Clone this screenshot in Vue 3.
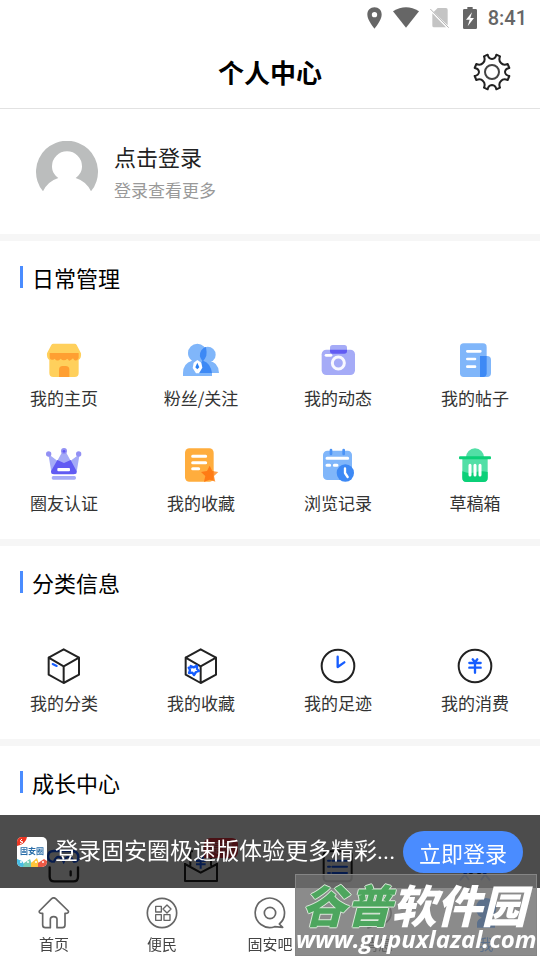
<script setup>
const daily = [
  { label: '我的主页', icon: 'shop' },
  { label: '粉丝/关注', icon: 'fans' },
  { label: '我的动态', icon: 'camera' },
  { label: '我的帖子', icon: 'posts' },
  { label: '圈友认证', icon: 'crown' },
  { label: '我的收藏', icon: 'favorite' },
  { label: '浏览记录', icon: 'history' },
  { label: '草稿箱', icon: 'drafts' }
]
const classified = [
  { label: '我的分类', icon: 'box' },
  { label: '我的收藏', icon: 'starbox' },
  { label: '我的足迹', icon: 'clock' },
  { label: '我的消费', icon: 'yuan' }
]
const tabs = [
  { label: '首页', icon: 'home' },
  { label: '便民', icon: 'apps' },
  { label: '固安吧', icon: 'forum' },
  { label: '消息', icon: 'message' },
  { label: '我', icon: 'me', active: true }
]
</script>

<template>
  <div class="page">
    <div class="status">
      <svg width="15" height="22" viewBox="0 0 45 66" fill="#666"><path fill-rule="evenodd" d="M22.500 1C10 1 1 10 1 23c0 16 21.500 42 21.500 42S44 39 44 23C44 10 35 1 22.500 1zm0 14a8 8 0 1 1 0 16 8 8 0 0 1 0-16z" /></svg>
      <svg width="26" height="22" viewBox="0 0 78 66" fill="#666"><path d="M0 13Q39-12 78 13L39 62z" /></svg>
      <svg width="22" height="22" viewBox="0 0 66 66"><path d="M23 3h25q5 0 5 5v47L11 15zM7 19l41 42H12q-5 0-5-5z" fill="#c4c4c4" /><path d="M1 6l55 56" stroke="#b5b5b5" stroke-width="3" /></svg>
      <svg width="14" height="22" viewBox="0 0 42 66"><path d="M13 0h16v6h9q4 0 4 4v52q0 4-4 4H4q-4 0-4-4V10q0-4 4-4h9z" fill="#666" /><path d="M27 16L9 38h11l-6 20 19-25H22z" fill="#fff" /></svg>
      <span>8:41</span>
    </div>

    <header class="header">
      <h1>个人中心</h1>
      <button class="gear" aria-label="设置">
        <svg width="38" height="38" viewBox="0 0 114 114" fill="none" stroke-linejoin="round">
          <path d="M33 10L44 5Q46 17 57 18Q68 17 70 5L81 10Q76 23 84 30Q91 38 104 33L109 45Q97 47 96 57Q97 67 109 69L104 81Q91 76 84 84Q76 91 81 104L70 109Q68 97 57 96Q46 97 44 109L33 104Q38 91 30 84Q23 76 10 81L5 69Q17 67 18 57Q17 47 5 45L10 33Q23 38 30 30Q38 23 33 10z" stroke="#222" stroke-width="6" />
          <circle cx="57" cy="57" r="21" stroke="#444" stroke-width="6" />
        </svg>
      </button>
    </header>

    <a class="profile" href="#login">
      <svg class="avatar" width="62" height="62" viewBox="0 0 186 186"><path fill="#bbbdbd" d="M21 151A93 93 0 1 1 165 151Q151 121 119 111C132 101 138 91 138 76a45 45 0 0 0-90 0c0 15 6 25 19 35Q35 121 21 151z" /></svg>
      <span class="who"><strong>点击登录</strong><small>登录查看更多</small></span>
    </a>

    <section class="panel">
      <h2>日常管理</h2>
      <div class="grid">
        <a v-for="item in daily" :key="item.icon" href="#" class="entry">
          <svg width="36" height="36" viewBox="0 0 108 108">
            <template v-if="item.icon === 'shop'">
              <path d="M22 2h64q4 0 6 4l13 25q2 14-7 20v39q0 12-12 12H22q-12 0-12-12V51Q1 45 3 31L16 6q2-4 6-4z" fill="#ffd05c" />
              <path d="M11 30h87v15q-6 12-14 5l-3-4q-12 12-14 4l-3-3q-11 10-20 0-10 11-18 0-10 8-15-2z" fill="#ff9f32" />
              <path d="M39 102V80q0-11 11-11h9q11 0 11 11v22z" fill="#ff9f32" />
            </template>
            <template v-else-if="item.icon === 'fans'">
              <circle cx="74" cy="35" r="24" fill="#80b6fa" /><path d="M40 90Q45 55 76 54q31 2 32 36z" fill="#80b6fa" />
              <path d="M27 53C17 45 15 38 15 30a28 28 0 0 1 56 0c0 9-4 17-10 23 15 5 26 20 26 37v9H0V90q0-29 27-37z" fill="#80b6fa" />
              <path d="M55 22q8-10 14-10 3 16 1 26-4 10-9 15 22 8 26 37H45q-1-20 13-36-13-16-3-32z" fill="#3d89f5" />
              <path d="M43 51l12 8 3 15-10 17H39L29 75l3-16z" fill="#fff" /><path d="M43 59l6 14-6 6-6-6z" fill="#267ff4" />
            </template>
            <template v-else-if="item.icon === 'camera'">
              <rect x="5" y="20" width="100" height="76" rx="14" fill="#a5abf7" /><rect x="30" y="6" width="51" height="26" rx="8" fill="#a5abf7" />
              <path d="M30 20h51v4q0 8-8 8H38q-8 0-8-8z" fill="#615bf3" /><rect x="14" y="33" width="23" height="8" rx="4" fill="#fff" />
              <circle cx="55" cy="60" r="18" fill="none" stroke="#f8f8ff" stroke-width="9" />
            </template>
            <template v-else-if="item.icon === 'posts'">
              <rect x="9" y="1" width="80" height="101" rx="11" fill="#80b6fa" /><path d="M69 39h21q12 0 12 12v39q0 12-12 12H69z" fill="#80b6fa" />
              <path d="M69 39h20v52q0 11-11 11h-9z" fill="#3d89f5" /><path d="M31 25h39M31 48h23M31 71h23" stroke="#fff" stroke-width="8" stroke-linecap="round" />
            </template>
            <template v-else-if="item.icon === 'crown'">
              <path d="M7 18l27 20L50 9h8l16 29 27-20-10 60H17z" fill="#a5abf7" /><circle cx="8" cy="18" r="8" fill="#9290f4" /><circle cx="54" cy="9" r="9" fill="#9290f4" /><circle cx="98" cy="18" r="8" fill="#9290f4" />
              <path d="M34 36l20 9 20-9 18 34q0 9-9 9H24q-9 0-9-9z" fill="#615bf3" /><circle cx="54" cy="10" r="4" fill="#615bf3" />
              <rect x="34" y="60" width="38" height="10" rx="3" fill="#fff" /><rect x="17" y="84" width="73" height="11" rx="5" fill="#a5abf7" />
            </template>
            <template v-else-if="item.icon === 'favorite'">
              <rect x="6" y="1" width="86" height="100" rx="13" fill="#ffad3d" />
              <path d="M29 25h39M29 44h39M29 62h18" stroke="#fff" stroke-width="9" stroke-linecap="round" />
              <path d="M80 53l8 16 18 3-13 12 4 17-17-6-17 6 4-17-13-12 18-3z" fill="#ffa04a" /><path d="M80 53l8 16 4 1v28l-12-3-17 6 4-17-13-12 18-3z" fill="#ff7b14" />
            </template>
            <template v-else-if="item.icon === 'history'">
              <rect x="9" y="8" width="87" height="88" rx="13" fill="#80b6fa" /><path d="M33 6v12M71 6v12" stroke="#4b93f6" stroke-width="8" stroke-linecap="round" />
              <path d="M21 31h62M21 52h8M43 52h8" stroke="#fff" stroke-width="9" stroke-linecap="round" /><circle cx="76" cy="75" r="26" fill="#3d89f5" />
              <path d="M75 61v14l8 12" fill="none" stroke="#fff" stroke-width="7" stroke-linecap="round" stroke-linejoin="round" />
            </template>
            <template v-else>
              <path d="M27 28a27 27 0 0 1 54 0zM16 30h76v59q0 13-13 13H29q-13 0-13-13z" fill="#52dfa6" /><path d="M16 70q20 9 38 3t38-1v17q0 13-13 13H29q-13 0-13-13z" fill="#0bd078" />
              <rect x="6" y="25" width="96" height="9" rx="3" fill="#0bd078" /><path d="M39 52v29M54 52v29M69 52v29" stroke="#fff" stroke-width="9" stroke-linecap="round" />
            </template>
          </svg>
          <span>{{ item.label }}</span>
        </a>
      </div>
    </section>

    <section class="panel">
      <h2>分类信息</h2>
      <div class="grid">
        <a v-for="item in classified" :key="item.icon" href="#" class="entry">
          <svg width="36" height="36" viewBox="0 0 108 108" fill="none" stroke="#222" stroke-width="6" stroke-linejoin="round" stroke-linecap="round">
            <template v-if="item.icon === 'box' || item.icon === 'starbox'">
              <path d="M53 4l46 25v51l-46 25L8 80V29zM8 29l45 26 46-26M53 55v49" />
              <path v-if="item.icon === 'box'" d="M20 48l12 6" stroke="#165dff" />
              <path v-else d="M23 54l9 4 10-5v10l6 6-9 3-6 9-5-7-10 1 3-9-4-7 8-1z" stroke="#165dff" stroke-width="7" />
            </template>
            <template v-else>
              <circle cx="54" cy="54" r="49" />
              <path v-if="item.icon === 'clock'" d="M53 26v31l20-14" stroke="#165dff" stroke-width="7" />
              <path v-else d="M47 34l7 9 7-9M37 45h34M37 59h34M54 44v30" stroke="#165dff" stroke-width="7" />
            </template>
          </svg>
          <span>{{ item.label }}</span>
        </a>
      </div>
    </section>

    <section class="panel">
      <h2>成长中心</h2>
      <div class="grid">
        <a href="#" class="entry" aria-label="钱包">
          <svg width="36" height="36" viewBox="0 0 108 108" fill="none" stroke-width="7" stroke-linecap="round"><path d="M18 41Q6 38 6 25 7 9 23 9h57q16 1 17 17 0 13-10 15M24 41q12-29 29 0 14-29 31 0" stroke="#165dff" /><path d="M11 58v28q0 14 14 14h57q14 0 14-14V58M74 70v12" stroke="#222" /></svg>
        </a>
        <a href="#" class="entry" aria-label="提现">
          <svg width="36" height="36" viewBox="0 0 108 108" fill="none" stroke-width="6" stroke-linejoin="round"><path d="M30 10H22V53M84 53V10h-8M6 45v54h96V45M6 48l47 26 49-26" stroke="#222" /><path d="M43 25l10 12 10-12M39 39h29M39 49h29M53 37v25" stroke="#165dff" /></svg>
          <em class="badge">提现</em>
        </a>
        <a href="#" class="entry" aria-label="任务">
          <svg width="36" height="36" viewBox="0 0 108 108" fill="none" stroke-width="6"><rect x="11" y="10" width="84" height="90" rx="10" stroke="#222" /><path d="M24 38h6M37 38h44M24 56h6M37 56h44M24 75h6M37 75h44" stroke="#165dff" stroke-linecap="round" /></svg>
        </a>
        <a href="#" class="entry" aria-label="等级">
          <svg width="36" height="36" viewBox="0 0 108 108" fill="none" stroke-width="6"><circle cx="54" cy="37" r="32" stroke="#222" /><path d="M37 80l17-12 17 12" stroke="#222" /><path d="M32 69L9 97M21 75l15 21M76 69l23 28M87 75L72 96" stroke="#165dff" /></svg>
        </a>
      </div>
    </section>

    <div class="dock">
      <aside class="banner">
        <svg class="logo" width="30" height="30" viewBox="0 0 30 30">
          <defs><clipPath id="logo-shape"><rect width="30" height="30" rx="5" /></clipPath></defs>
          <g clip-path="url(#logo-shape)">
            <rect width="30" height="30" fill="#fff" /><path d="M0 0h10Q9 7 0 9z" fill="#ed3521" /><path d="M5 2L3 4l3 1-3 2" fill="none" stroke="#fff" />
            <path d="M0 22l5 2 4 6H0z" fill="#48bde4" /><path d="M7 26l6-4 3 8H6z" fill="#75cbb6" /><path d="M14 26l6-5 3 9h-9z" fill="#ffc53b" /><path d="M21 26l6-4 3 2v6h-9z" fill="#ed5945" /><circle cx="4" cy="25" r="1" fill="#fff" /><circle cx="11" cy="25" r="1" fill="#fff" /><circle cx="19" cy="25" r="1" fill="#fff" /><circle cx="26" cy="25" r="1" fill="#fff" />
          </g>
          <text x="15" y="17" text-anchor="middle" font-size="8" font-weight="700" fill="#286ca8">固安圈</text>
        </svg>
        <p>登录固安圈极速版体验更多精彩...</p>
        <button>立即登录</button>
      </aside>
      <nav class="tabs">
        <a v-for="tab in tabs" :key="tab.icon" href="#" :class="{ active: tab.active }">
          <svg width="32" height="32" viewBox="0 0 96 96" fill="none" stroke="currentColor" stroke-width="5" stroke-linejoin="round">
            <path v-if="tab.icon === 'home'" d="M41 5q6-5 12 0l38 37q2 8-10 7v35q0 8-8 8H57V67q0-8-10-8t-10 8v25H22q-8 0-8-8V49Q2 50 4 42z" />
            <g v-else-if="tab.icon === 'apps'"><circle cx="48" cy="48" r="44" /><g stroke-width="4"><path d="M29 28h17v17H29zM29 53h17v17H29zM54 53h18v17H54zM63 24l12 12-12 12-12-12z" /></g></g>
            <g v-else-if="tab.icon === 'forum'"><path d="M76 81A44 44 0 1 0 62 89L86 91z" /><circle cx="48" cy="48" r="17" /></g>
            <path v-else-if="tab.icon === 'message'" d="M20 78A42 38 0 1 1 38 85L18 93z" />
            <g v-else fill="currentColor" stroke="none"><circle cx="48" cy="34" r="31" /><path d="M21 92V76q5-15 27-15t27 15v16z" /></g>
          </svg>
          <span>{{ tab.label }}</span>
        </a>
      </nav>
    </div>

    <div class="watermark">
      <div class="brand"><span>谷普</span>软件园</div>
      <div class="site">www.gupuxlazal.com</div>
    </div>
  </div>
</template>

<style>
body {
  margin: 0;
  background: #fff;
}
</style>

<style scoped>
.page {
  min-height: 100vh;
  box-sizing: border-box;
  color: #222;
  font-family: "Noto Sans CJK SC", sans-serif;
}
svg {
  display: block;
  flex: none;
}
a {
  color: inherit;
  text-decoration: none;
}
button {
  padding: 0;
  border: 0;
  background: none;
  font-family: inherit;
}
.status {
  display: flex;
  align-items: center;
  justify-content: flex-end;
  gap: 11px;
  height: 36px;
  padding-right: 13px;
  color: #666;
  font: 500 20px/36px Roboto, sans-serif;
}
.header {
  display: grid;
  grid-template-columns: 1fr auto 1fr;
  align-items: center;
  height: 72px;
  padding: 0 29px;
  border-bottom: 1px solid #e2e2e2;
}
.header h1 {
  grid-column: 2;
  margin: 0;
  color: #000;
  font-size: 26px;
  line-height: 36px;
  font-weight: 700;
}
.gear {
  justify-self: end;
}
.profile {
  display: flex;
  align-items: flex-start;
  gap: 16px;
  padding: 32px 36px 31px;
}
.who {
  display: flex;
  flex-direction: column;
  gap: 5px;
}
.who strong {
  font-size: 22px;
  line-height: 30px;
  font-weight: 400;
}
.who small {
  color: #999;
  font-size: 17px;
  line-height: 27px;
}
.panel {
  padding: 20px 0 24px;
  border-top: 7px solid #f6f6f6;
}
.panel h2 {
  display: flex;
  align-items: center;
  gap: 9px;
  margin: 0;
  padding-left: 20px;
  color: #000;
  font-size: 22px;
  line-height: 32px;
  font-weight: 400;
}
.panel h2::before {
  width: 3px;
  height: 22px;
  background: #4a8cff;
  content: "";
}
.grid {
  display: grid;
  grid-template-columns: repeat(4, 68px);
  justify-content: space-between;
  row-gap: 38px;
  padding: 50px 31px 0 30px;
}
.entry {
  position: relative;
  display: flex;
  flex-direction: column;
  align-items: center;
  gap: 7px;
  color: #333;
  font-size: 17px;
  line-height: 24px;
  white-space: nowrap;
}
.badge {
  position: absolute;
  top: -10px;
  left: 37px;
  width: 34px;
  border-radius: 6px 6px 6px 0;
  background: #f33a49;
  color: #f9a0a8;
  font-size: 12px;
  line-height: 20px;
  font-style: normal;
  text-align: center;
}
.dock {
  position: fixed;
  right: 0;
  bottom: 0;
  left: 0;
}
.banner {
  display: flex;
  align-items: center;
  height: 73px;
  padding: 0 17px;
  background: rgba(0, 0, 0, 0.7);
  color: #fff;
}
.banner p {
  flex: 1;
  margin: 0 8px;
  font-family: Roboto, "Noto Sans CJK SC", sans-serif;
  font-size: 23px;
  line-height: 34px;
  white-space: nowrap;
}
.banner button {
  width: 120px;
  height: 42px;
  border-radius: 21px;
  background: #4a8cff;
  color: #fff;
  font-size: 22px;
  line-height: 42px;
}
.tabs {
  display: grid;
  grid-template-columns: repeat(5, 1fr);
  height: 72px;
  background: #fff;
}
.tabs a {
  display: flex;
  flex-direction: column;
  align-items: center;
  gap: 4px;
  padding-top: 9px;
  color: #666;
  font-size: 15px;
  line-height: 22px;
}
.tabs span {
  color: #444;
}
.tabs .active,
.tabs .active span {
  color: #167bff;
}
.watermark {
  position: fixed;
  right: 3px;
  bottom: 4px;
  box-sizing: border-box;
  width: 242px;
  height: 82px;
  border: 1px solid #858585;
  background: rgba(110, 110, 110, 0.8);
  color: #fff;
  text-align: center;
  white-space: nowrap;
}
.brand {
  padding: 8px 4px 0 0;
  font-size: 45px;
  line-height: 42px;
  font-style: italic;
  font-weight: 900;
}
.brand span {
  color: #4da65e;
  text-shadow: 1px 0 #d8e8d8, -1px 0 #d8e8d8, 0 1px #d8e8d8, 0 -1px #d8e8d8;
}
.site {
  font: italic 700 24px/28px "Open Sans", sans-serif;
}
</style>
